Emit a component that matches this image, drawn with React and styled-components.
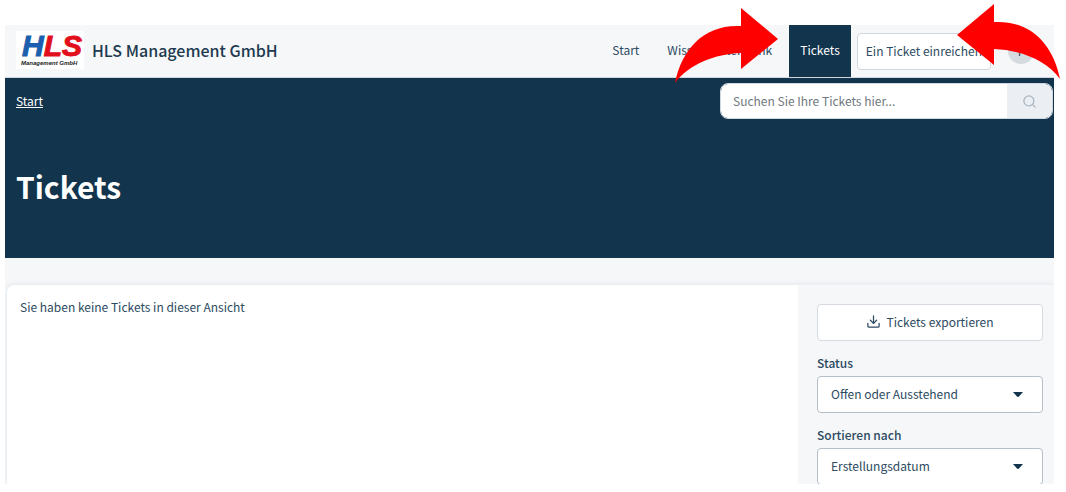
import React from "react";
import styled, { createGlobalStyle } from "styled-components";
import { FiSearch, FiDownload } from "react-icons/fi";

const App = () => {
  const [query, setQuery] = React.useState("");
  const [status, setStatus] = React.useState("open");
  const [sort, setSort] = React.useState("created");

  return (
    <>
      <GlobalStyle />
      <Page>
        <Portal>
          <Header>
            <Brand href="#">
              <Logo />
              <BrandName>HLS Management GmbH</BrandName>
            </Brand>
            <Nav>
              <NavLink href="#">Start</NavLink>
              <NavLink href="#">Wissensdatenbank</NavLink>
              <NavLink href="#" $active>
                Tickets
              </NavLink>
              <SubmitButton type="button">Ein Ticket einreichen</SubmitButton>
              <Avatar type="button" aria-label="Profil">
                F
              </Avatar>
            </Nav>
          </Header>

          <Hero>
            <HeroBar>
              <Crumb href="#">Start</Crumb>
              <Search onSubmit={(e) => e.preventDefault()}>
                <SearchInput
                  aria-label="Tickets suchen"
                  placeholder="Suchen Sie Ihre Tickets hier..."
                  value={query}
                  onChange={(e) => setQuery(e.target.value)}
                />
                <SearchButton type="submit" aria-label="Suchen">
                  <FiSearch size={15} />
                </SearchButton>
              </Search>
            </HeroBar>
            <Title>Tickets</Title>
          </Hero>

          <Content>
            <TicketList>Sie haben keine Tickets in dieser Ansicht</TicketList>
            <Sidebar>
              <ExportButton type="button">
                <FiDownload size={15} />
                Tickets exportieren
              </ExportButton>
              <Field>
                <Label htmlFor="status">Status</Label>
                <SelectBox>
                  <Select
                    id="status"
                    value={status}
                    onChange={(e) => setStatus(e.target.value)}
                  >
                    <option value="open">Offen oder Ausstehend</option>
                  </Select>
                  <Caret />
                </SelectBox>
              </Field>
              <Field>
                <Label htmlFor="sort">Sortieren nach</Label>
                <SelectBox>
                  <Select
                    id="sort"
                    value={sort}
                    onChange={(e) => setSort(e.target.value)}
                  >
                    <option value="created">Erstellungsdatum</option>
                  </Select>
                  <Caret />
                </SelectBox>
              </Field>
            </Sidebar>
          </Content>
        </Portal>
        <Arrow $top={8} $right={288} />
        <Arrow $top={4} $right={6} $flip />
      </Page>
    </>
  );
};

const Logo = () => (
  <LogoBox viewBox="0 0 68 38" role="img" aria-label="HLS Management GmbH">
    <rect width="68" height="38" fill="#fff" />
    <LogoLetters x="6" y="25">
      <tspan fill="#1b5fae" stroke="#1b5fae">
        H
      </tspan>
      <tspan fill="#e2101c" stroke="#e2101c">
        LS
      </tspan>
    </LogoLetters>
    <LogoLine x="5" y="34">
      Management GmbH
    </LogoLine>
  </LogoBox>
);

const Caret = () => (
  <CaretIcon viewBox="0 0 10 5" aria-hidden="true">
    <path d="M0 0 H10 L6 4.500 Q5 5.300 4 4.500 Z" fill="#12344d" />
  </CaretIcon>
);

const Arrow = (props) => (
  <ArrowIcon viewBox="0 0 103 75" aria-hidden="true" {...props}>
    <path
      d="M66 0 L103 31 L66 61 V45 C40 46 14 56 0 75 C7 40 30 16 66 18 Z"
      fill="#fe0000"
    />
  </ArrowIcon>
);

const GlobalStyle = createGlobalStyle`
  * {
    box-sizing: border-box;
  }

  body {
    margin: 0;
    background: #fff;
  }

  body, button, input, select {
    font-family: "Noto Sans CJK SC", "Noto Sans", sans-serif;
    font-size: 12px;
    line-height: 18px;
    color: #2c4a61;
  }
`;

const Page = styled.div`
  position: relative;
  height: 100vh;
  padding: 25px 12px 8px 5px;
  overflow: hidden;
`;

const Portal = styled.div`
  height: 100%;
  display: flex;
  flex-direction: column;
  overflow: hidden;
  background: #f5f7f9;
`;

const Header = styled.header`
  flex: none;
  display: flex;
  justify-content: space-between;
  height: 53px;
  padding: 0 20px 0 11px;
  border-bottom: 1px solid #cfd7df;
`;

const Brand = styled.a`
  display: flex;
  align-items: center;
  gap: 8px;
  padding-bottom: 2px;
  color: #1d3a50;
  text-decoration: none;
`;

const LogoBox = styled.svg`
  width: 68px;
  height: 38px;
  overflow: visible;
`;

const LogoLetters = styled.text`
  font: italic bold 30px "Liberation Sans", sans-serif;
  stroke-width: 1px;
`;

const LogoLine = styled.text`
  font: italic bold 6px "Liberation Sans", sans-serif;
  fill: #222;
`;

const BrandName = styled.span`
  font-size: 16px;
  font-weight: 500;
  line-height: 24px;
`;

const Nav = styled.nav`
  display: flex;
  align-items: center;
`;

const NavLink = styled.a`
  display: flex;
  align-items: center;
  align-self: stretch;
  padding: 0 11px 2px;
  margin-right: 6px;
  color: ${({ $active }) => ($active ? "#fff" : "#2c4a61")};
  background: ${({ $active }) => ($active ? "#12344d" : "transparent")};
  text-decoration: none;
`;

const SubmitButton = styled.button`
  height: 37px;
  padding: 0 8px;
  border: 1px solid #cfd7df;
  border-radius: 4px;
  background: #fff;
`;

const Avatar = styled.button`
  width: 26px;
  height: 26px;
  margin-left: 17px;
  padding: 0;
  border: 0;
  border-radius: 50%;
  background: #d5dade;
`;

const Hero = styled.section`
  flex: none;
  height: 180px;
  color: #fff;
  background: #12344d;
`;

const HeroBar = styled.div`
  display: flex;
  align-items: center;
  justify-content: space-between;
  padding: 5px 1px 0 11px;
`;

const Crumb = styled.a`
  color: #fff;
`;

const Search = styled.form`
  display: flex;
  width: 333px;
  height: 36px;
  border: 1px solid #cfd7df;
  border-radius: 8px;
  overflow: hidden;
`;

const SearchInput = styled.input`
  flex: 1;
  min-width: 0;
  padding: 0 12px;
  border: 0;
  outline: none;
  background: #fff;

  &::placeholder {
    color: #6f7880;
    opacity: 1;
  }
`;

const SearchButton = styled.button`
  display: grid;
  place-items: center;
  width: 45px;
  padding: 0;
  border: 0;
  color: #a9b4bf;
  background: #ebeff3;
`;

const Title = styled.h1`
  margin: 43px 0 0 11px;
  font-size: 30px;
  font-weight: 700;
  line-height: 48px;
`;

const Content = styled.main`
  flex: 1;
  display: flex;
  min-height: 0;
  margin: 27px 0 0 2px;
  border-radius: 8px 0 0 0;
  box-shadow: 0 0 6px rgba(18, 52, 77, 0.1);
`;

const TicketList = styled.section`
  flex: 1;
  padding: 13px;
  border-radius: 8px 0 0 0;
  background: #fff;
`;

const Sidebar = styled.aside`
  width: 256px;
  padding: 19px 11px 0 19px;
  background: #f5f7f9;
`;

const ExportButton = styled.button`
  display: flex;
  align-items: center;
  justify-content: center;
  gap: 5px;
  width: 100%;
  height: 37px;
  padding: 0 0 2px;
  border: 1px solid #d5dbe1;
  border-radius: 4px;
  background: #fff;
`;

const Field = styled.div`
  margin-top: 13px;
`;

const Label = styled.label`
  display: block;
  margin-bottom: 4px;
  font-weight: 500;
`;

const SelectBox = styled.div`
  position: relative;
`;

const Select = styled.select`
  appearance: none;
  display: block;
  width: 100%;
  height: 37px;
  padding: 0 32px 2px 13px;
  border: 1px solid #b4bec8;
  border-radius: 4px;
  background: #fff;
`;

const CaretIcon = styled.svg`
  position: absolute;
  top: 16px;
  right: 20px;
  width: 10px;
  height: 5px;
  pointer-events: none;
`;

const ArrowIcon = styled.svg`
  position: absolute;
  top: ${({ $top }) => $top}px;
  right: ${({ $right }) => $right}px;
  width: 103px;
  height: 75px;
  transform: ${({ $flip }) => ($flip ? "scaleX(-1)" : "none")};
  pointer-events: none;
`;

export default App;
